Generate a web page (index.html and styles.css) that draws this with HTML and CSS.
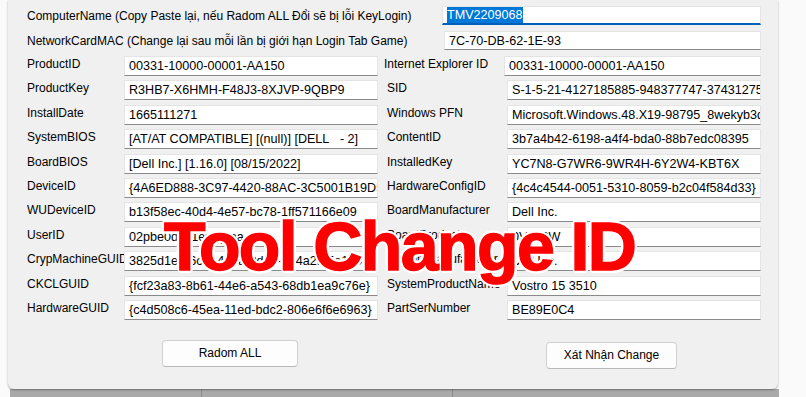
FILE: index.html
```
<!DOCTYPE html>
<html>
<head>
    <title>Tool Change ID</title>
    <link rel="stylesheet" href="styles.css">
</head>
<body>
    <div class="window">
        <div class="top-row">
            <div class="label top-label">ComputerName (Copy Paste lại, nếu Radom ALL Đổi sẽ bị lỗi KeyLogin)</div>
            <div class="field focus"><span class="sel">TMV2209068</span></div>
        </div>
        <div class="top-row">
            <div class="label top-label mac">NetworkCardMAC (Change lại sau mỗi lần bị giới hạn Login Tab Game)</div>
            <div class="field">7C-70-DB-62-1E-93</div>
        </div>

        <div class="grid">
            <div class="col">
                <div class="row"><div class="label">ProductID</div><div class="field">00331-10000-00001-AA150</div></div>
                <div class="row"><div class="label">ProductKey</div><div class="field">R3HB7-X6HMH-F48J3-8XJVP-9QBP9</div></div>
                <div class="row"><div class="label">InstallDate</div><div class="field">1665111271</div></div>
                <div class="row"><div class="label">SystemBIOS</div><div class="field">[AT/AT COMPATIBLE] [(null)] [DELL&nbsp;&nbsp;&nbsp;- 2]</div></div>
                <div class="row"><div class="label">BoardBIOS</div><div class="field">[Dell Inc.] [1.16.0] [08/15/2022]</div></div>
                <div class="row"><div class="label">DeviceID</div><div class="field">{4A6ED888-3C97-4420-88AC-3C5001B19D5C}</div></div>
                <div class="row"><div class="label">WUDeviceID</div><div class="field">b13f58ec-40d4-4e57-bc78-1ff571166e09</div></div>
                <div class="row"><div class="label">UserID</div><div class="field">02pbe0d6c1epfqqaa</div></div>
                <div class="row"><div class="label">CrypMachineGUID</div><div class="field">3825d1e6-6c5f-4e5a-9d4b-134a2f05e1d0</div></div>
                <div class="row"><div class="label">CKCLGUID</div><div class="field">{fcf23a83-8b61-44e6-a543-68db1ea9c76e}</div></div>
                <div class="row"><div class="label">HardwareGUID</div><div class="field">{c4d508c6-45ea-11ed-bdc2-806e6f6e6963}</div></div>
            </div>
            <div class="col right">
                <div class="row ie"><div class="label">Internet Explorer ID</div><div class="field">00331-10000-00001-AA150</div></div>
                <div class="row"><div class="label">SID</div><div class="field">S-1-5-21-4127185885-948377747-3743127566-1001</div></div>
                <div class="row"><div class="label">Windows PFN</div><div class="field">Microsoft.Windows.48.X19-98795_8wekyb3d8bbwe</div></div>
                <div class="row"><div class="label">ContentID</div><div class="field">3b7a4b42-6198-a4f4-bda0-88b7edc08395</div></div>
                <div class="row"><div class="label">InstalledKey</div><div class="field">YC7N8-G7WR6-9WR4H-6Y2W4-KBT6X</div></div>
                <div class="row"><div class="label">HardwareConfigID</div><div class="field">{4c4c4544-0051-5310-8059-b2c04f584d33}</div></div>
                <div class="row"><div class="label">BoardManufacturer</div><div class="field">Dell Inc.</div></div>
                <div class="row"><div class="label">BoardProduct</div><div class="field">0V709W</div></div>
                <div class="row"><div class="label">SystemManufacturer</div><div class="field">Dell Inc.</div></div>
                <div class="row"><div class="label">SystemProductName</div><div class="field">Vostro 15 3510</div></div>
                <div class="row"><div class="label">PartSerNumber</div><div class="field">BE89E0C4</div></div>
            </div>
        </div>

        <div class="buttons">
            <button class="btn btn-random">Radom ALL</button>
            <button class="btn btn-confirm">Xát Nhận Change</button>
        </div>

        <div class="overlay">Tool Change ID</div>
    </div>
    <div class="behind">
        <div class="behind-part"></div>
        <div class="behind-part"></div>
        <div class="behind-part"></div>
    </div>
</body>
</html>
```

FILE: styles.css
```
body {
    font-family: 'Liberation Sans', Arial, sans-serif;
    font-size: 12px;
    background-color: #fafafa;
    color: #000000;
    margin: 0;
    padding: 0;
    width: 806px;
    height: 397px;
    overflow: hidden;
}
.window {
    position: relative;
    margin-left: 8px;
    width: 770px;
    height: 389px;
    box-sizing: border-box;
    padding: 6px 17px 0 19px;
    background-color: #f0f0f0;
    border-radius: 0 0 6px 6px;
    box-shadow: 0 1px 2px rgba(0,0,0,0.35);
}
.top-row {
    display: flex;
    height: 19px;
    margin-bottom: 6px;
}
.top-row .field {
    flex: 1;
}
.label {
    line-height: 15px;
    white-space: nowrap;
    overflow: hidden;
    flex: none;
}
.top-label {
    width: 415px;
    padding-top: 3px;
}
.top-label.mac {
    width: 417px;
}
.field {
    font-size: 12.6px;
    background-color: #ffffff;
    border: 1px solid #e4e4e4;
    border-bottom-color: #8a8a8a;
    box-sizing: border-box;
    padding: 0 4px;
    line-height: 18px;
    white-space: nowrap;
    overflow: hidden;
}
.field.focus {
    border-bottom: 2px solid #005fb8;
    line-height: 17px;
}
.sel {
    background-color: #0078d7;
    color: #ffffff;
    padding: 1px 0;
}
.grid {
    display: flex;
    gap: 6px;
}
.col {
    display: flex;
    flex-direction: column;
    gap: 4.4px;
}
.row {
    display: flex;
    height: 20px;
}
.row .label {
    width: 97px;
    padding-top: 1px;
}
.row .field {
    width: 254px;
    height: 20px;
    line-height: 19px;
}
.col.right .label {
    width: 120px;
    padding-left: 3px;
}
.col.right .row.ie .label {
    width: 120px;
    padding-left: 0;
}
.col.right .row.ie .field {
    width: 257px;
}
.buttons {
    display: flex;
    margin-top: 20px;
}
.btn {
    font-family: 'Liberation Sans', Arial, sans-serif;
    font-size: 12px;
    color: #000000;
    background-color: #fdfdfd;
    border: 1px solid #d0d0d0;
    border-bottom-color: #b8b8b8;
    border-radius: 4px;
    height: 27px;
    padding: 0;
    cursor: pointer;
}
.btn-random {
    width: 136px;
    margin-left: 135px;
}
.btn-confirm {
    width: 131px;
    margin-left: 248px;
    margin-top: 2px;
}
.overlay {
    position: absolute;
    left: 156px;
    top: 212px;
    font-family: 'Liberation Sans', Arial, sans-serif;
    font-weight: bold;
    font-size: 68px;
    line-height: 68px;
    letter-spacing: -1.6px;
    color: #ff0000;
    -webkit-text-stroke: 1.4px #ff0000;
    white-space: nowrap;
    text-shadow: 3px 0 #ffffff, -3px 0 #ffffff, 0 3px #ffffff, 0 -3px #ffffff,
        2px 2px #ffffff, -2px -2px #ffffff, 2px -2px #ffffff, -2px 2px #ffffff,
        3px 1px #ffffff, -3px -1px #ffffff, 1px 3px #ffffff, -1px -3px #ffffff;
}
.behind {
    display: flex;
    margin-left: 10px;
    width: 769px;
    height: 8px;
    background-color: #a9a9a9;
}
.behind-part {
    height: 8px;
    border-right: 1px solid #8c8c8c;
}
.behind-part:nth-child(1) {
    width: 191px;
}
.behind-part:nth-child(2) {
    width: 250px;
}
.behind-part:nth-child(3) {
    flex: 1;
    border-right: none;
}
```
